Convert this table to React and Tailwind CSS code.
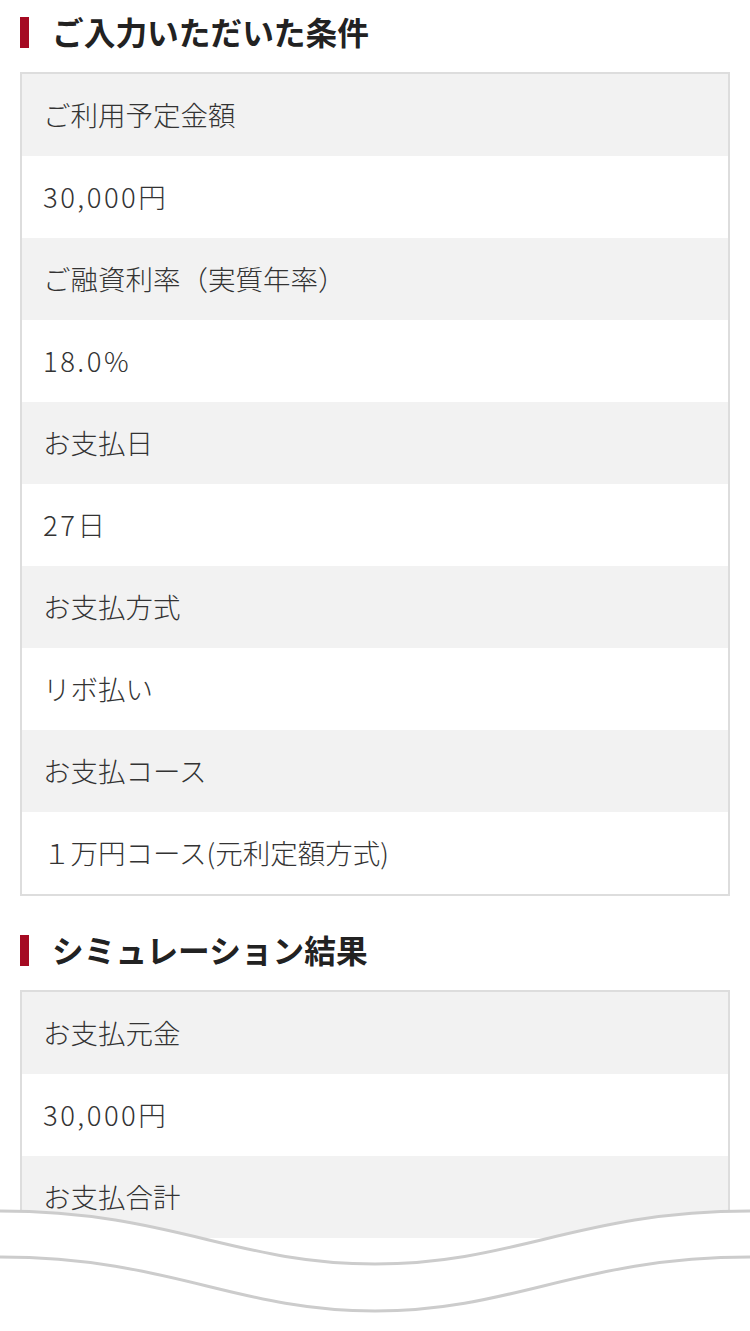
import React from "react";

const cond = [
  ["ご利用予定金額", "30,000円"],
  ["ご融資利率（実質年率）", "18.0%"],
  ["お支払日", "27日"],
  ["お支払方式", "リボ払い"],
  ["お支払コース", "１万円コース(元利定額方式)"],
];

const result = [
  ["お支払元金", "30,000円"],
  ["お支払合計", "31,000円"],
];

function Txt({ s }) {
  const parts = s.split(/([0-9.,%]+)/);
  return (
    <span>
      {parts.map((p, i) =>
        /^[0-9.,%]+$/.test(p) ? (
          <span key={i} className="tracking-[0.09em]">
            {p}
          </span>
        ) : (
          <span key={i}>{p}</span>
        )
      )}
    </span>
  );
}

function Heading({ children, className = "" }) {
  return (
    <div className={`flex h-[64px] items-center px-[20px] ${className}`}>
      <span className="block h-[31px] w-[9px] bg-[#a50a22]" />
      <h2 className="ml-[23px] text-[31.7px] font-bold leading-none text-[#222]">
        {children}
      </h2>
    </div>
  );
}

function Table({ rows }) {
  return (
    <div className="mx-[20px] mt-[8px] border-2 border-[#dddddd]">
      {rows.map(([k, v]) => (
        <React.Fragment key={k}>
          <div className="flex h-[82px] items-center bg-[#f2f2f2] px-[21px] text-[27.5px] font-light text-[#333]">
            <Txt s={k} />
          </div>
          <div className="flex h-[82px] items-center bg-white px-[21px] text-[27.5px] font-light text-[#333]">
            <Txt s={v} />
          </div>
        </React.Fragment>
      ))}
    </div>
  );
}

export default function App() {
  return (
    <div
      className="relative h-[1331px] w-[750px] overflow-hidden bg-white"
      style={{ fontFamily: '"Noto Sans CJK JP", "Noto Sans", sans-serif' }}
    >
      <Heading>ご入力いただいた条件</Heading>
      <Table rows={cond} />
      <Heading className="mt-[22px]">シミュレーション結果</Heading>
      <Table rows={result} />

      <svg
        className="absolute left-0 top-[1209px]"
        width="750"
        height="122"
        viewBox="0 0 750 122"
      >
        <path
          d="M0 2 C170 2 235 55 375 55 S580 2 750 2 L750 122 L0 122 Z"
          fill="#ffffff"
        />
        <path
          d="M0 2 C170 2 235 55 375 55 S580 2 750 2"
          fill="none"
          stroke="#cccccc"
          strokeWidth="3"
        />
        <path
          d="M0 48 C170 48 235 102 375 102 S580 48 750 48"
          fill="none"
          stroke="#cccccc"
          strokeWidth="3"
        />
      </svg>
    </div>
  );
}
